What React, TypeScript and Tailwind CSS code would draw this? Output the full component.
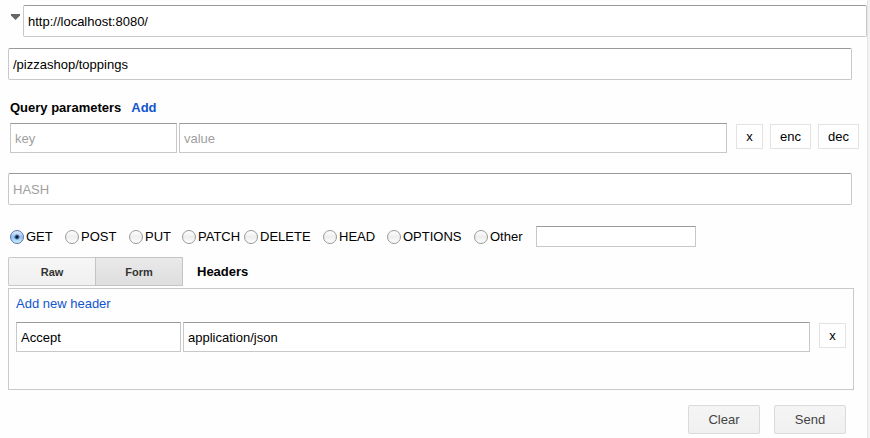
import { useState } from "react";
import clsx from "clsx";

const field =
  "min-w-0 border border-[#c8c8c8] border-t-[#999] bg-white px-1 text-black outline-none placeholder:text-[#9f9f9f] placeholder:opacity-100";
const largeField = clsx(field, "h-8 rounded-[2px]");
const rowField = clsx(field, "h-[30px]");
const smallButton =
  "h-[25px] shrink-0 border border-[#e3e3e3] bg-white text-black";
const actionButton =
  "h-[29px] w-[72px] rounded-[2px] border border-[#dadada] bg-linear-to-b from-[#f5f5f5] to-[#f0f0f0] text-[#444]";

const methods = [
  { name: "GET", width: "w-[55px]" },
  { name: "POST", width: "w-16" },
  { name: "PUT", width: "w-[53px]" },
  { name: "PATCH", width: "w-[62px]" },
  { name: "DELETE", width: "w-[79px]" },
  { name: "HEAD", width: "w-16" },
  { name: "OPTIONS", width: "w-[87px]" },
  { name: "Other", width: "w-[62px]" },
];

const radio =
  "size-3.5 shrink-0 appearance-none rounded-full border border-[#999] bg-linear-to-b from-white via-[#ededed] to-white checked:border-[#5c74a4] checked:bg-[radial-gradient(circle,#0b1d38_0,#0b1d38_1px,transparent_3px),linear-gradient(#e2effc,#8fc0f2_50%,#c8f0ff)]";

export default function App() {
  const [method, setMethod] = useState("GET");

  return (
    <div className="flex min-h-screen bg-[#fefefe] font-['Liberation_Sans',Arial,sans-serif] text-[13px] leading-4 text-black">
      <form className="min-w-0 flex-1 pt-[5px]" onSubmit={(e) => e.preventDefault()}>
        <div className="flex items-start pl-2">
          <button type="button" aria-label="Collapse URL" className="w-[15px] pt-[9px] pb-2 pl-[3px]">
            <svg width="9" height="6" viewBox="0 0 9 6" className="block">
              <path d="M0 0H9V1.500L4.500 6L0 1.500Z" fill="#666" />
            </svg>
          </button>
          <input aria-label="Host" className={clsx(largeField, "flex-1")} defaultValue="http://localhost:8080/" />
        </div>

        <div className="flex pt-[11px] pr-[15px] pl-2">
          <input aria-label="Path" className={clsx(largeField, "flex-1")} defaultValue="/pizzashop/toppings" />
        </div>

        <div className="flex gap-2.5 pt-5 pl-2.5 font-bold">
          <span>Query parameters</span>
          <a href="#add" className="text-[#15c]">Add</a>
        </div>

        <div className="flex pt-[7px] pr-2 pl-2.5">
          <input aria-label="Parameter key" placeholder="key" className={clsx(rowField, "mr-0.5 w-[167px]")} />
          <input aria-label="Parameter value" placeholder="value" className={clsx(rowField, "flex-1")} />
          <div className="flex gap-[7px] pt-px pl-[9px]">
            <button type="button" className={clsx(smallButton, "w-[27px]")}>x</button>
            <button type="button" className={clsx(smallButton, "w-[41px]")}>enc</button>
            <button type="button" className={clsx(smallButton, "w-[41px]")}>dec</button>
          </div>
        </div>

        <div className="flex pt-5 pr-[15px] pl-2">
          <input aria-label="Hash" placeholder="HASH" className={clsx(largeField, "flex-1")} />
        </div>

        <div className="flex items-center pt-[21px] pl-2.5">
          {methods.map(({ name, width }) => (
            <label key={name} className={clsx("flex shrink-0 items-center gap-0.5", width)}>
              <input
                type="radio"
                name="method"
                className={radio}
                checked={method === name}
                onChange={() => setMethod(name)}
              />
              {name}
            </label>
          ))}
          <input aria-label="Other method" className={clsx(field, "h-[21px] w-40")} />
        </div>

        <div className="flex items-center pt-2.5 pl-2">
          <button
            type="button"
            className="h-[29px] w-[87px] rounded-l-[2px] border border-r-0 border-[#c9c9c9] bg-linear-to-b from-[#f6f6f6] to-[#f0f0f0] text-[11px] font-bold text-[#333]"
          >
            Raw
          </button>
          <button
            type="button"
            className="h-[29px] w-[88px] border border-[#c4c4c4] bg-linear-to-b from-[#e9e9e9] to-[#dedede] text-[11px] font-bold text-[#333]"
          >
            Form
          </button>
          <h2 className="pl-3.5 font-bold">Headers</h2>
        </div>

        <div className="pt-0.5 pr-[13px] pl-2">
          <section className="border border-[#c9c9c9] px-[7px] pt-[7px] pb-[37px]">
            <a href="#add-header" className="text-[#15c]">Add new header</a>
            <div className="flex pt-2.5">
              <input aria-label="Header name" className={clsx(rowField, "mr-0.5 w-[165px]")} defaultValue="Accept" />
              <input aria-label="Header value" className={clsx(rowField, "flex-1")} defaultValue="application/json" />
              <div className="pt-px pl-[9px]">
                <button type="button" className={clsx(smallButton, "w-[27px]")}>x</button>
              </div>
            </div>
          </section>
        </div>

        <div className="flex justify-end gap-3.5 pt-[15px] pr-[21px]">
          <button type="reset" className={actionButton}>Clear</button>
          <button type="submit" className={actionButton}>Send</button>
        </div>
      </form>
      <div className="w-[3px] border-l border-[#e5e5e5] bg-[#f2f2f2]" />
    </div>
  );
}
